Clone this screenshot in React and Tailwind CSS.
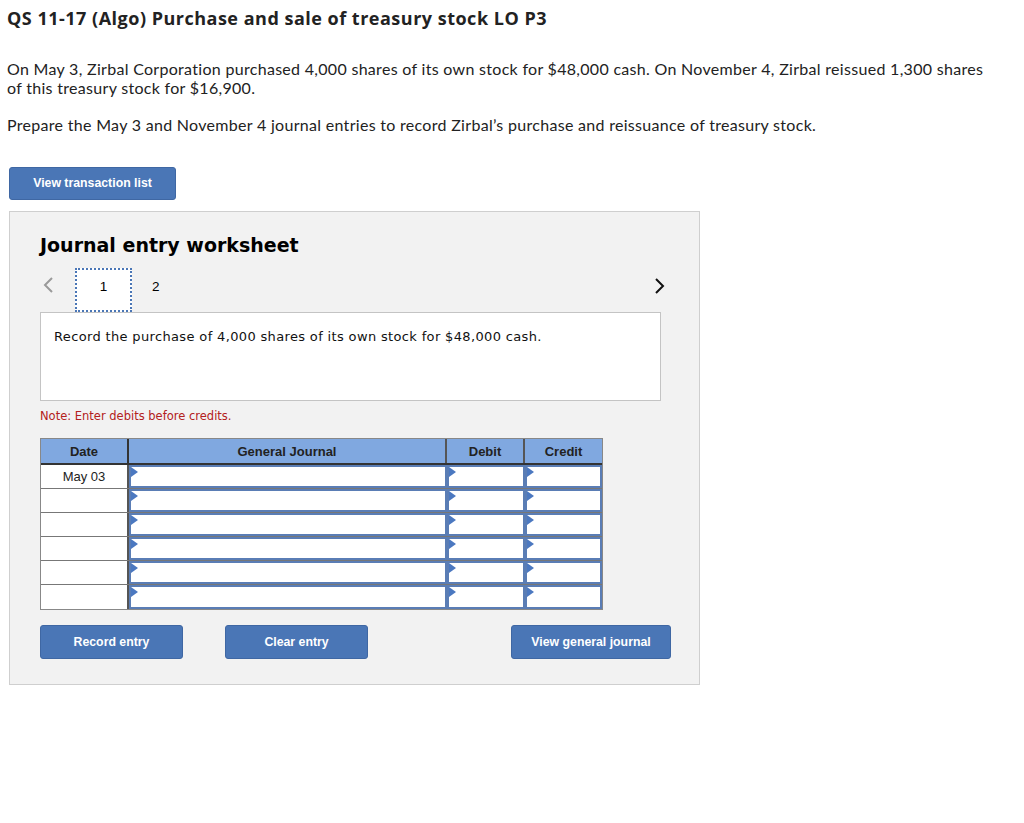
import React from 'react';

const rows = ['May 03', '', '', '', '', ''];

const InputCell = ({ w }) => (
  <div className={`${w} h-full bg-white border-2 border-[#5a7db5] relative`}>
    <span className="absolute left-0 top-0 w-0 h-0 border-t-[5px] border-b-[5px] border-l-[7px] border-t-transparent border-b-transparent border-l-[#4b78c0]" />
  </div>
);

const BlueButton = ({ children, className = '' }) => (
  <button
    className={`bg-[#4a76b6] text-white font-bold text-[12.3px] rounded-[3px] border border-[#3f67a3] ${className}`}
    style={{ fontFamily: '"Liberation Sans", Arial, sans-serif' }}
  >
    {children}
  </button>
);

export default function App() {
  return (
    <div className="w-[1024px] h-[823px] bg-white text-[#111]" style={{ fontFamily: 'Lato, "Open Sans", sans-serif' }}>
      <div className="px-[7px] pt-[6px]">
        <h1 className="text-[18px] font-bold leading-[24px] text-[#222] tracking-[0.5px]" style={{ fontFamily: '"Open Sans", sans-serif' }}>
          QS 11-17 (Algo) Purchase and sale of treasury stock LO P3
        </h1>
        <p className="mt-[29px] w-[985px] text-[16px] leading-[19px] tracking-[0.3px] text-[#222]">
          On May 3, Zirbal Corporation purchased 4,000 shares of its own stock for $48,000 cash. On November 4, Zirbal reissued 1,300 shares of this treasury stock for $16,900.
        </p>
        <p className="mt-[18px] text-[16px] leading-[19px] tracking-[0.3px] text-[#222]">
          Prepare the May 3 and November 4 journal entries to record Zirbal’s purchase and reissuance of treasury stock.
        </p>
      </div>

      <div className="pl-[9px] mt-[33px]">
        <BlueButton className="w-[167px] h-[33px]">View transaction list</BlueButton>

        <div className="mt-[11px] w-[691px] h-[474px] bg-[#f2f2f2] border border-[#cfcfcf] pl-[30px] pr-[39px]" style={{ fontFamily: '"DejaVu Sans", Verdana, sans-serif' }}>
          <h2 className="mt-[20px] text-[19px] font-bold leading-[26px] text-black">Journal entry worksheet</h2>

          <div className="mt-[10px] flex items-start h-[44px] relative">
            <span className="mt-[8px] ml-[2px] text-[#999]">
              <svg width="12" height="18" viewBox="0 0 12 18"><path d="M10 2 L3 9 L10 16" fill="none" stroke="#9a9a9a" strokeWidth="2" /></svg>
            </span>
            <div className="ml-[21px] w-[57px] h-[44px] bg-white border-2 border-dotted border-[#4a76b6] flex items-start justify-center pt-[7px] text-[13.5px] text-black" style={{ fontFamily: '"Liberation Sans", Arial, sans-serif' }}>
              1
            </div>
            <div className="ml-[20px] pt-[9px] text-[13.5px] text-black" style={{ fontFamily: '"Liberation Sans", Arial, sans-serif' }}>2</div>
            <span className="ml-auto mt-[9px] mr-[-6px]">
              <svg width="12" height="18" viewBox="0 0 12 18"><path d="M2 2 L9 9 L2 16" fill="none" stroke="#111" strokeWidth="2" /></svg>
            </span>
          </div>

          <div className="w-[621px] h-[89px] bg-white border border-[#c4c4c4] px-[13px] pt-[14px] text-[13px] tracking-[0.35px] text-[#111]">
            Record the purchase of 4,000 shares of its own stock for $48,000 cash.
          </div>

          <div className="mt-[7px] text-[11.5px] text-[#b32020]">Note: Enter debits before credits.</div>

          <div className="mt-[13px] w-[563px] border border-[#888]" style={{ fontFamily: '"Liberation Sans", Arial, sans-serif' }}>
            <div className="flex h-[26px] bg-[#80a8e0] border-b-2 border-[#333] text-[13px] font-bold text-[#222]">
              <div className="w-[88px] flex items-center justify-center border-r-2 border-[#333]">Date</div>
              <div className="w-[318px] flex items-center justify-center border-r-2 border-[#555]">General Journal</div>
              <div className="w-[78px] flex items-center justify-center border-r-2 border-[#555]">Debit</div>
              <div className="flex-1 flex items-center justify-center">Credit</div>
            </div>
            {rows.map((d, i) => (
              <div key={i} className={`flex h-[24px] ${i < rows.length - 1 ? 'border-b border-[#777]' : ''}`}>
                <div className="w-[88px] bg-white flex items-center justify-center text-[13px] text-[#222] border-r-2 border-[#555]">{d}</div>
                <InputCell w="w-[318px]" />
                <InputCell w="w-[78px]" />
                <InputCell w="flex-1" />
              </div>
            ))}
          </div>

          <div className="mt-[15px] flex items-center w-[631px]">
            <BlueButton className="w-[143px] h-[34px]">Record entry</BlueButton>
            <BlueButton className="ml-[42px] w-[143px] h-[34px]">Clear entry</BlueButton>
            <BlueButton className="ml-auto w-[160px] h-[34px]">View general journal</BlueButton>
          </div>
        </div>
      </div>
    </div>
  );
}
